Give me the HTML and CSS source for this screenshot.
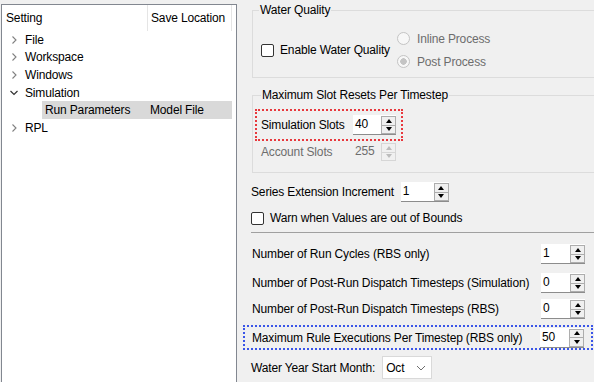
FILE: index.html
```html
<!DOCTYPE html>
<html lang="en">
<head>
  <meta charset="UTF-8" />
  <title>Run Parameters</title>
  <link rel="stylesheet" href="styles.css">
</head>
<body>
  <div class="window">

    <!-- Cây cài đặt bên trái -->
    <div class="tree">
      <div class="tree-head">
        <div class="col-name">Setting</div>
        <div class="col-loc">Save Location</div>
      </div>
      <div class="tree-row">
        <svg class="twisty" width="16" height="10" viewBox="0 0 16 10"><path d="M3.5 1.5 L7 5 L3.5 8.5" fill="none" stroke="#808080" stroke-width="1.1"/></svg>File
      </div>
      <div class="tree-row">
        <svg class="twisty" width="16" height="10" viewBox="0 0 16 10"><path d="M3.5 1.5 L7 5 L3.5 8.5" fill="none" stroke="#808080" stroke-width="1.1"/></svg>Workspace
      </div>
      <div class="tree-row">
        <svg class="twisty" width="16" height="10" viewBox="0 0 16 10"><path d="M3.5 1.5 L7 5 L3.5 8.5" fill="none" stroke="#808080" stroke-width="1.1"/></svg>Windows
      </div>
      <div class="tree-row">
        <svg class="twisty" width="16" height="10" viewBox="0 0 16 10"><path d="M1.5 3 L5 6.5 L8.5 3" fill="none" stroke="#333" stroke-width="1.2"/></svg>Simulation
      </div>
      <div class="tree-row child selected">
        <span class="child-name">Run Parameters</span><span>Model File</span>
      </div>
      <div class="tree-row">
        <svg class="twisty" width="16" height="10" viewBox="0 0 16 10"><path d="M3.5 1.5 L7 5 L3.5 8.5" fill="none" stroke="#808080" stroke-width="1.1"/></svg>RPL
      </div>
    </div>

    <!-- Trang Run Parameters -->
    <div class="page">
      <fieldset class="group group-wq">
        <legend>Water Quality</legend>
        <label class="check">
          <span class="box"></span>Enable Water Quality
        </label>
        <div class="radios">
          <div class="radio disabled"><span class="dot"></span>Inline Process</div>
          <div class="radio disabled checked"><span class="dot"></span>Post Process</div>
        </div>
      </fieldset>

      <fieldset class="group group-slots">
        <legend>Maximum Slot Resets Per Timestep</legend>
        <div class="focus-red">
          <span class="slot-label">Simulation Slots</span>
          <span class="spin"><span class="spin-val">40</span><span class="spin-btns"><span class="up"></span><span class="down"></span></span></span>
        </div>
        <div class="slot-row disabled">
          <span class="slot-label">Account Slots</span>
          <span class="spin"><span class="spin-val">255</span><span class="spin-btns"><span class="up"></span><span class="down"></span></span></span>
        </div>
      </fieldset>

      <div class="row series">
        <span>Series Extension Increment</span>
        <span class="spin"><span class="spin-val">1</span><span class="spin-btns"><span class="up"></span><span class="down"></span></span></span>
      </div>

      <label class="check warn">
        <span class="box"></span>Warn when Values are out of Bounds
      </label>

      <hr class="sep">

      <div class="param p1">
        <span>Number of Run Cycles (RBS only)</span>
        <span class="spin wide"><span class="spin-val">1</span><span class="spin-btns"><span class="up"></span><span class="down"></span></span></span>
      </div>
      <div class="param p2">
        <span>Number of Post-Run Dispatch Timesteps (Simulation)</span>
        <span class="spin wide"><span class="spin-val">0</span><span class="spin-btns"><span class="up"></span><span class="down"></span></span></span>
      </div>
      <div class="param p3">
        <span>Number of Post-Run Dispatch Timesteps (RBS)</span>
        <span class="spin wide"><span class="spin-val">0</span><span class="spin-btns"><span class="up"></span><span class="down"></span></span></span>
      </div>
      <div class="param focus-blue">
        <span>Maximum Rule Executions Per Timestep (RBS only)</span>
        <span class="spin wide"><span class="spin-val">50</span><span class="spin-btns"><span class="up"></span><span class="down"></span></span></span>
      </div>

      <div class="row month">
        <span>Water Year Start Month:</span>
        <span class="select">Oct<svg width="10" height="6" viewBox="0 0 10 6"><path d="M1 1 L5 5 L9 1" fill="none" stroke="#707070" stroke-width="1"/></svg></span>
      </div>
    </div>
  </div>
</body>
</html>
```

FILE: styles.css
```css
/* Nền cửa sổ kiểu Windows */
body {
  margin: 0;
  background-color: #f0f0f0;
  color: #000;
  font-family: "Liberation Sans", Arial, sans-serif;
  font-size: 12px;
  letter-spacing: -0.15px;
}
.window {
  display: flex;
  height: 382px;
  overflow: hidden;
}
/* Cây bên trái */
.tree {
  width: 234px;
  margin: 4px 0 0 1px;
  border: 1px solid #828790;
  border-bottom: 0;
  background-color: #fff;
}
.tree-head {
  display: flex;
  height: 26px;
  line-height: 26px;
}
.col-name {
  width: 141px;
  padding-left: 4px;
  border-right: 1px solid #e5e5e5;
}
.col-loc {
  width: 80px;
  padding-left: 3px;
  border-right: 1px solid #e5e5e5;
}
.tree-row {
  display: flex;
  align-items: center;
  height: 17.6px;
  padding-left: 7px;
}
.twisty {
  width: 16px;
  flex: none;
}
.tree-row.child {
  margin-left: 40px;
  padding-left: 3px;
  width: 187px;
}
.selected {
  background-color: #d9d9d9;
}
.child-name {
  width: 105px;
}
/* Khung bên phải */
.page {
  flex: 1;
  padding-left: 14px;
  overflow: hidden;
}
.group {
  margin: 2px -20px 0 1px;
  padding: 0 6px;
  border: 1px solid #dcdcdc;
}
.group legend {
  padding: 0 1px;
  line-height: 16px;
}
.group-wq {
  display: flex;
  align-items: center;
  padding-top: 9px;
  padding-bottom: 4px;
}
.check {
  display: flex;
  align-items: center;
  line-height: 16px;
}
.group-wq .check {
  margin-left: 2px;
}
.box {
  width: 11px;
  height: 11px;
  margin-right: 6px;
  border: 1px solid #333;
  border-radius: 2px;
  background-color: #fff;
}
.radios {
  margin-left: 7px;
}
.radio {
  display: flex;
  align-items: center;
  height: 23px;
}
.dot {
  width: 11px;
  height: 11px;
  margin-right: 7px;
  border: 1px solid #c4c4c4;
  border-radius: 50%;
  background-color: #f7f7f7;
}
.checked .dot {
  background: radial-gradient(circle, #c4c4c4 0 3px, #f7f7f7 3.5px);
}
.disabled {
  color: #6d6d6d;
}
.group-slots {
  margin-top: 9px;
  padding: 6px 8px 10px 8px;
}
.focus-red {
  display: inline-flex;
  align-items: center;
  margin-left: -6px;
  padding: 4px 5px 4px 4px;
  border: 2px dotted #e8383d;
}
.slot-label {
  width: 92px;
}
.slot-row {
  display: flex;
  align-items: center;
  margin-top: 1px;
}
/* Ô số có nút tăng giảm */
.spin {
  display: inline-flex;
  width: 43px;
  height: 20px;
  box-sizing: border-box;
  background-color: #fff;
  border-bottom: 1px solid #8c8c8c;
}
.spin.wide {
  width: 44px;
}
.spin-val {
  flex: 1;
  padding-left: 2px;
  line-height: 19px;
}
.spin-btns {
  display: flex;
  flex-direction: column;
  width: 13px;
  margin: 1px 0 0 1px;
  border: 1px solid #adadad;
  background-color: #f0f0f0;
}
.spin-btns span {
  flex: 1;
  display: flex;
  align-items: center;
  justify-content: center;
}
.spin-btns .up {
  border-bottom: 1px solid #adadad;
}
.spin-btns .up::after,
.spin-btns .down::after {
  content: "";
  border-left: 3.5px solid transparent;
  border-right: 3.5px solid transparent;
}
.spin-btns .up::after {
  border-bottom: 4px solid #000;
}
.spin-btns .down::after {
  border-top: 4px solid #000;
}
.disabled .spin {
  background-color: transparent;
  border-bottom-color: transparent;
}
.disabled .spin-btns {
  border-color: #d6d6d6;
}
.disabled .spin-btns .up {
  border-bottom-color: #d6d6d6;
}
.disabled .spin-btns .up::after {
  border-bottom-color: #bcbcbc;
}
.disabled .spin-btns .down::after {
  border-top-color: #bcbcbc;
}
.row {
  display: flex;
  align-items: center;
}
.series {
  margin-top: 9px;
}
.series .spin {
  margin-left: 7px;
  width: 48px;
}
.warn {
  margin-top: 8px;
}
.sep {
  margin: 6px -20px 0 0;
  border: 0;
  border-top: 1px solid #a0a0a0;
}
.param {
  display: flex;
  align-items: center;
  justify-content: space-between;
  height: 26px;
  padding: 0 9px 0 1px;
}
.p1 {
  margin-top: 8px;
}
.p2 {
  margin-top: 3px;
}
.p3 {
  margin-top: 0;
}
.focus-blue {
  margin: 3px 1px 0 -8px;
  padding: 0 7px;
  height: 21px;
  border: 2px dotted #3a55e8;
}
.month {
  margin-top: 6px;
}
.select {
  display: inline-flex;
  align-items: center;
  justify-content: space-between;
  width: 40px;
  height: 21px;
  margin-left: 7px;
  padding: 0 5px 0 3px;
  border: 1px solid #d9d9d9;
  background-color: #fff;
}
```
